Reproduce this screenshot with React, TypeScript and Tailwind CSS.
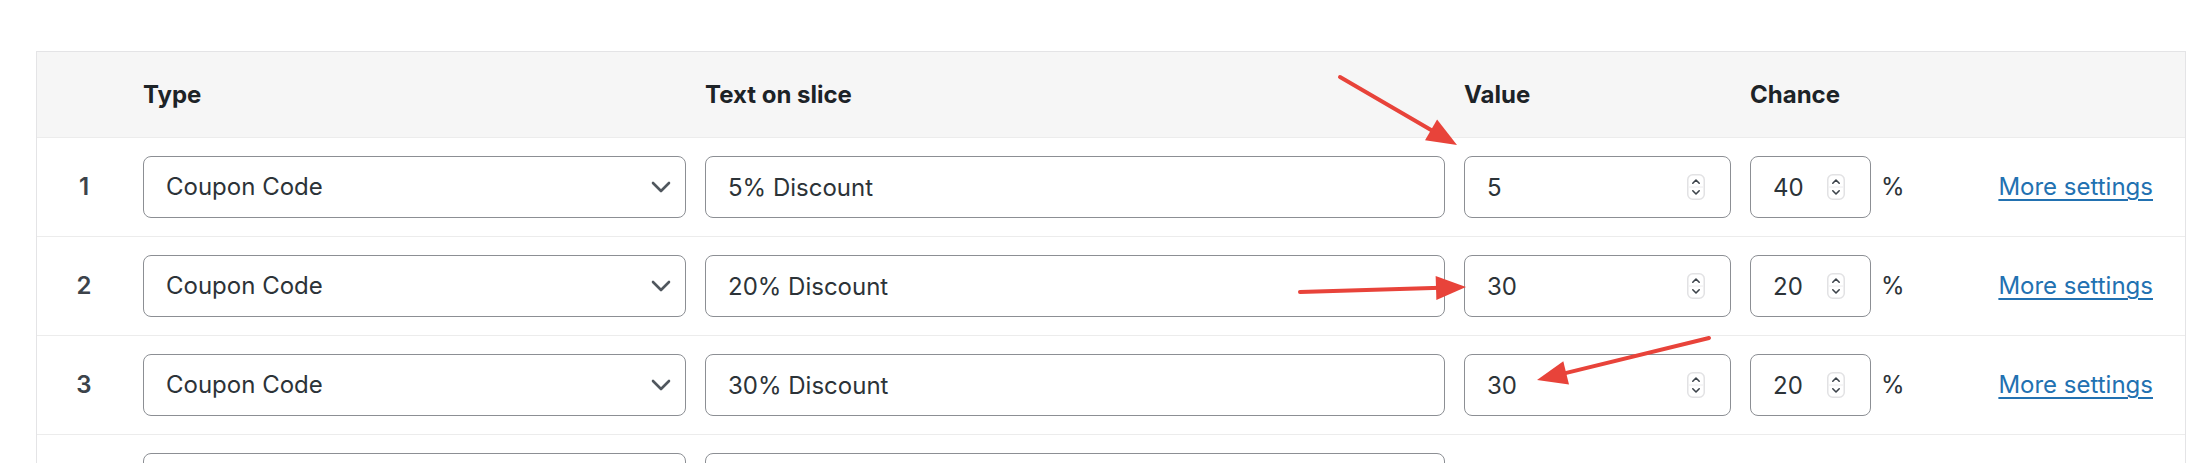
import React from "react";

type Prize = {
    type: string;
    text: string;
    value: string;
    chance: string;
};

const prizes: Prize[] = [
    { type: "Coupon Code", text: "5% Discount", value: "5", chance: "40" },
    { type: "Coupon Code", text: "20% Discount", value: "30", chance: "20" },
    { type: "Coupon Code", text: "30% Discount", value: "30", chance: "20" },
];

// red annotation arrows drawn on top of the screenshot
const arrows = [
    { from: [1340, 77], to: [1457, 145] },
    { from: [1300, 292], to: [1466, 287] },
    { from: [1709, 338], to: [1537, 380] },
];

function unit(from: number[], to: number[]) {
    const dx = to[0] - from[0];
    const dy = to[1] - from[1];
    const len = Math.hypot(dx, dy);
    return [dx / len, dy / len];
}

function arrowHead(from: number[], to: number[]) {
    const [ux, uy] = unit(from, to);
    const headLen = 30;
    const half = 12;
    const bx = to[0] - ux * headLen;
    const by = to[1] - uy * headLen;
    return `${to[0]},${to[1]} ${bx - uy * half},${by + ux * half} ${bx + uy * half},${by - ux * half}`;
}

function Spinner() {
    return (
        <svg width="18" height="26" viewBox="0 0 18 26" className="block">
            <rect x="0.75" y="0.75" width="16.5" height="24.5" rx="5" fill="#fff" stroke="#e2e2e4" strokeWidth="1.5" />
            <line x1="2" y1="13" x2="16" y2="13" stroke="#ececee" strokeWidth="1" />
            <path d="M5.8 9.2 L9 6 L12.2 9.2" fill="none" stroke="#3c434a" strokeWidth="1.6" strokeLinecap="round" strokeLinejoin="round" />
            <path d="M5.8 16.8 L9 20 L12.2 16.8" fill="none" stroke="#3c434a" strokeWidth="1.6" strokeLinecap="round" strokeLinejoin="round" />
        </svg>
    );
}

function Chevron() {
    return (
        <svg
            width="20"
            height="12"
            viewBox="0 0 20 12"
            className="pointer-events-none absolute right-[15px] top-1/2 -translate-y-1/2"
        >
            <path d="M2 2 L10 10 L18 2" fill="none" stroke="#50575e" strokeWidth="2.6" strokeLinecap="round" strokeLinejoin="round" />
        </svg>
    );
}

function NumberField({ value, width }: { value: string; width: string }) {
    return (
        <div className={`relative ${width}`}>
            <input
                type="text"
                readOnly
                value={value}
                className="w-full h-[62px] rounded-[8px] border-[1.5px] border-[#8c8f94] bg-white pl-[22px] pr-[50px] text-[24px] text-[#2c3338] outline-none"
            />
            <span className="absolute right-[26px] top-1/2 -translate-y-1/2">
                <Spinner />
            </span>
        </div>
    );
}

function PrizeRow({ prize, index }: { prize: Prize; index: number }) {
    return (
        <div className="flex items-center h-[99px] border-t border-[#ececec]">
            <div className="w-[106px] pr-[12px] text-center text-[24px] font-semibold text-[#3c434a]">
                {index + 1}
            </div>
            <div className="relative w-[543px]">
                <select
                    defaultValue={prize.type}
                    className="w-full h-[62px] appearance-none rounded-[8px] border-[1.5px] border-[#8c8f94] bg-white pl-[22px] text-[24px] text-[#2c3338] outline-none"
                >
                    <option>Coupon Code</option>
                    <option>No Prize</option>
                </select>
                <Chevron />
            </div>
            <input
                type="text"
                readOnly
                value={prize.text}
                className="ml-[19px] w-[740px] h-[62px] rounded-[8px] border-[1.5px] border-[#8c8f94] bg-white px-[22px] text-[24px] text-[#2c3338] outline-none"
            />
            <div className="ml-[19px]">
                <NumberField value={prize.value} width="w-[267px]" />
            </div>
            <div className="ml-[19px]">
                <NumberField value={prize.chance} width="w-[121px]" />
            </div>
            <span className="ml-[10px] text-[24px] text-[#2c3338]">%</span>
            <a
                href="#"
                className="ml-auto mr-[32px] text-[24px] text-[#2271b1] underline underline-offset-[4px] decoration-[1.5px]"
            >
                More settings
            </a>
        </div>
    );
}

// the next row is only partly in view: just the tops of its fields show
function CutOffRow() {
    return (
        <div className="flex items-start h-[99px] border-t border-[#ececec] pt-[18px]">
            <div className="w-[106px]" />
            <div className="w-[543px] h-[62px] rounded-[8px] border-[1.5px] border-[#8c8f94] bg-white" />
            <div className="ml-[19px] w-[740px] h-[62px] rounded-[8px] border-[1.5px] border-[#8c8f94] bg-white" />
        </div>
    );
}

export default function App() {
    return (
        <div className="relative h-[463px] overflow-hidden bg-white font-[Inter,sans-serif]">
            <div className="pt-[51px] pl-[36px]">
                <div className="w-[2150px] border border-[#e4e4e6] bg-white">
                    <div className="flex items-center h-[85px] bg-[#f6f6f6] text-[24px] font-bold text-[#1d2327]">
                        <div className="w-[106px]" />
                        <div className="w-[543px]">Type</div>
                        <div className="ml-[19px] w-[740px]">Text on slice</div>
                        <div className="ml-[19px] w-[267px]">Value</div>
                        <div className="ml-[19px] w-[121px]">Chance</div>
                    </div>
                    {prizes.map((prize, index) => (
                        <PrizeRow key={`${index}-${prize.text}`} prize={prize} index={index} />
                    ))}
                    <CutOffRow />
                </div>
            </div>

            <svg
                width="2200"
                height="463"
                className="pointer-events-none absolute left-0 top-0"
            >
                {arrows.map((a, i) => {
                    const [ux, uy] = unit(a.from, a.to);
                    return (
                        <g key={i}>
                            <line
                                x1={a.from[0]}
                                y1={a.from[1]}
                                x2={a.to[0] - ux * 25}
                                y2={a.to[1] - uy * 25}
                                stroke="#e8433a"
                                strokeWidth="4"
                                strokeLinecap="round"
                            />
                            <polygon points={arrowHead(a.from, a.to)} fill="#e8433a" />
                        </g>
                    );
                })}
            </svg>
        </div>
    );
}
